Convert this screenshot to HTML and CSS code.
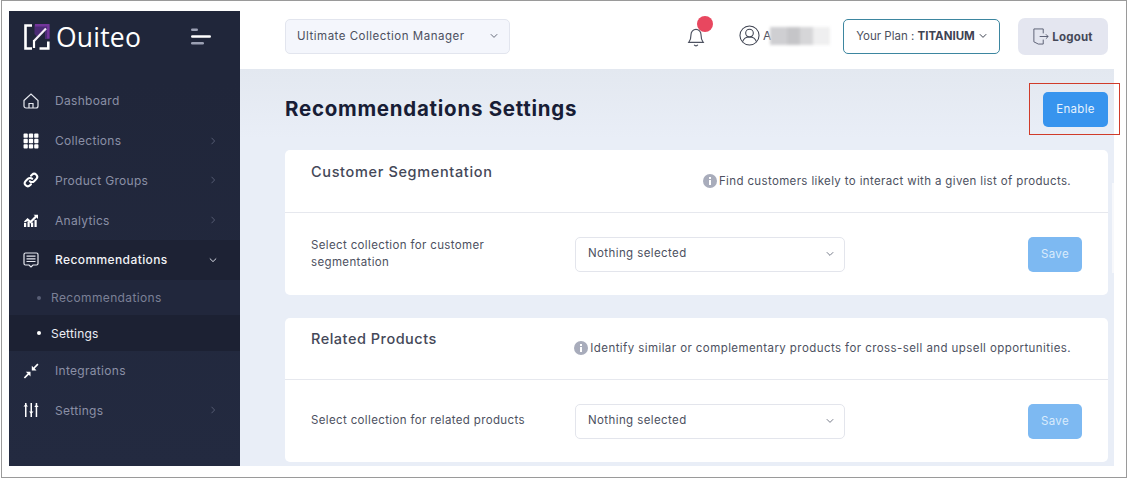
FILE: index.html
```html
<!DOCTYPE html>
<html lang="en">
<head>
<meta charset="utf-8">
<title>Recommendations Settings</title>
<link rel="stylesheet" href="styles.css">
</head>
<body>
<div class="frame">
  <aside class="sidebar">
    <div class="brand">
      <svg class="logo" width="26" height="26" viewBox="0 0 26 26">
        <path d="M10.500 0.500H25.500V15L21 15 21 4.500 13 12.500 10.500 10z" fill="#4a2a74"/>
        <path d="M11 1.300H24.300V14.500" fill="none" stroke="#73359b" stroke-width="2.400"/>
        <path d="M8 1.500H1.500V24.500H8" fill="none" stroke="#fff" stroke-width="2.600"/>
        <path d="M24.300 17.500V24.500H15.500" fill="none" stroke="#fff" stroke-width="2.600"/>
        <path d="M10 17L22 4.500" fill="none" stroke="#f4eef8" stroke-width="2.200"/>
        <path d="M10 16V24" fill="none" stroke="#fff" stroke-width="2.200"/>
      </svg>
      <span class="brand-name">Ouiteo</span>
      <svg class="burger" width="20" height="18" viewBox="0 0 20 18">
        <rect x="0" y="0.500" width="7" height="2.600" rx="1.300" fill="#9ba0b3"/>
        <rect x="0" y="7.200" width="20" height="2.600" rx="1.300" fill="#fff"/>
        <rect x="0" y="14" width="13" height="2.600" rx="1.300" fill="#9ba0b3"/>
      </svg>
    </div>
    <nav class="nav">
      <a class="nav-item">
        <svg class="nav-icon" width="16" height="16" viewBox="0 0 16 16" fill="none" stroke="#e6e8ef" stroke-width="1.200"><path d="M1 7.500L8 1l7 6.500V13a2 2 0 0 1-2 2H3a2 2 0 0 1-2-2z"/><path d="M6 15v-4.500h4V15"/></svg>
        <span class="nav-label">Dashboard</span>
      </a>
      <a class="nav-item">
        <svg class="nav-icon" width="16" height="16" viewBox="0 0 15 14" fill="#fff"><rect x="0.500" y="0" width="4" height="4" rx=".8"/><rect x="5.500" y="0" width="4" height="4" rx=".8"/><rect x="10.500" y="0" width="4" height="4" rx=".8"/><rect x="0.500" y="5" width="4" height="4" rx=".8"/><rect x="5.500" y="5" width="4" height="4" rx=".8"/><rect x="10.500" y="5" width="4" height="4" rx=".8"/><rect x="0.500" y="10" width="4" height="4" rx=".8"/><rect x="5.500" y="10" width="4" height="4" rx=".8"/><rect x="10.500" y="10" width="4" height="4" rx=".8"/></svg>
        <span class="nav-label">Collections</span>
        <svg class="chev" width="6" height="8" viewBox="0 0 6 8"><path d="M1.500 .8L4.600 4 1.500 7.200" fill="none" stroke="#555b72" stroke-width="1"/></svg>
      </a>
      <a class="nav-item">
        <svg class="nav-icon" width="16" height="16" viewBox="0 0 16 16" fill="none" stroke="#fff" stroke-width="2" stroke-linecap="round"><path d="M6.800 9.200a3 3 0 0 0 4.300 0l2.200-2.200a3 3 0 0 0-4.300-4.300L8 3.700"/><path d="M9.200 6.800a3 3 0 0 0-4.300 0L2.700 9a3 3 0 0 0 4.300 4.300l1-1"/></svg>
        <span class="nav-label">Product Groups</span>
        <svg class="chev" width="6" height="8" viewBox="0 0 6 8"><path d="M1.500 .8L4.600 4 1.500 7.200" fill="none" stroke="#555b72" stroke-width="1"/></svg>
      </a>
      <a class="nav-item">
        <svg class="nav-icon" width="16" height="16" viewBox="0 0 16 16" fill="#fff"><rect x="1" y="11" width="2.200" height="4"/><rect x="4.500" y="9.500" width="2.200" height="5.500"/><rect x="8" y="10.500" width="2.200" height="4.500"/><rect x="11.500" y="8" width="2.200" height="7"/><path d="M1 9.500l3.500-3.500 3 2.500 4.500-4.500-1.500-1.300H15V7l-1.400-1.400-6 6-3-2.600L1.800 10.600z"/></svg>
        <span class="nav-label">Analytics</span>
        <svg class="chev" width="6" height="8" viewBox="0 0 6 8"><path d="M1.500 .8L4.600 4 1.500 7.200" fill="none" stroke="#555b72" stroke-width="1"/></svg>
      </a>
      <a class="nav-item is-open">
        <svg class="nav-icon" width="16" height="16" viewBox="0 0 16 16" fill="none" stroke="#e6e8ef" stroke-width="1.200"><path d="M2.500 1h11A1.500 1.500 0 0 1 15 2.500v9a1.500 1.500 0 0 1-1.500 1.500H10l-2 2-2-2H2.500A1.500 1.500 0 0 1 1 11.500v-9A1.500 1.500 0 0 1 2.500 1z"/><path d="M3.500 4.200h9M3.500 6.800h9M3.500 9.500h9"/></svg>
        <span class="nav-label">Recommendations</span>
        <svg class="chev chev-open" width="8" height="6" viewBox="0 0 8 6"><path d="M.8 1.500L4 4.600 7.200 1.500" fill="none" stroke="#d5d8e2" stroke-width="1"/></svg>
      </a>
      <div class="submenu">
        <a class="sub-item"><i class="dot"></i>Recommendations</a>
        <a class="sub-item is-active"><i class="dot"></i>Settings</a>
      </div>
      <a class="nav-item">
        <svg class="nav-icon" width="16" height="16" viewBox="0 0 16 16" fill="#fff"><path d="M15.500 1.800L11.700 5.600 13.500 7.400H8.800V2.700l1.700 1.700L14.300.6z"/><path d="M.8 14.400l3.800-3.800-1.800-1.800h4.700v4.700l-1.700-1.700-3.800 3.800z"/></svg>
        <span class="nav-label">Integrations</span>
      </a>
      <a class="nav-item">
        <svg class="nav-icon" width="16" height="16" viewBox="0 0 16 16" fill="#fff"><rect x="2" y="1" width="1.500" height="14"/><rect x="7.500" y="1" width="1.500" height="14"/><rect x="12.700" y="1" width="1.500" height="14"/><path d="M.5 4.500l2.250-2.500L5 4.500zM6 9.500h4.500L8.250 12zM11.200 5l2.250-2.500L15.700 5z"/></svg>
        <span class="nav-label">Settings</span>
        <svg class="chev" width="6" height="8" viewBox="0 0 6 8"><path d="M1.500 .8L4.600 4 1.500 7.200" fill="none" stroke="#555b72" stroke-width="1"/></svg>
      </a>
    </nav>
  </aside>
  <div class="main">
    <header class="topbar">
      <div class="app-select">
        <span>Ultimate Collection Manager</span>
        <svg width="8" height="6" viewBox="0 0 8 6"><path d="M.8 1.200L4 4.400 7.200 1.200" fill="none" stroke="#666b7a" stroke-width="1"/></svg>
      </div>
      <div class="top-right">
        <div class="bell">
          <svg width="18" height="20" viewBox="0 0 20 22" fill="none" stroke="#4d5260" stroke-width="1.300"><path d="M10 2.500a5.500 5.500 0 0 0-5.500 5.500c0 5-1 7-2.500 9h16c-1.500-2-2.500-4-2.500-9A5.500 5.500 0 0 0 10 2.500z"/><path d="M8 19.500a2.200 2.200 0 0 0 4 0"/></svg>
          <span class="badge"></span>
        </div>
        <div class="user">
          <svg width="21" height="21" viewBox="0 0 22 22" fill="none" stroke="#3d4250" stroke-width="1.100"><circle cx="11" cy="11" r="10"/><circle cx="11" cy="8.500" r="4"/><path d="M3.800 17.500c1-3.500 3.500-5 7.200-5s6.200 1.500 7.200 5"/></svg>
          <span class="user-initial">A</span>
          <span class="user-blur"></span>
        </div>
        <div class="plan">Your Plan : <b>TITANIUM</b>
          <svg width="8" height="6" viewBox="0 0 8 6"><path d="M.8 1.200L4 4.400 7.200 1.200" fill="none" stroke="#3d4250" stroke-width="1"/></svg>
        </div>
        <button class="logout">
          <svg width="16" height="17" viewBox="0 0 18 19" fill="none" stroke="#50556a" stroke-width="1"><path d="M11.500 6V1H1v14.500L6 18h5.500v-5"/><path d="M7.500 9.500h9.500M14.500 7l2.500 2.500-2.500 2.500"/></svg>
          Logout
        </button>
      </div>
    </header>
    <main class="content">
      <div class="page-head">
        <h1>Recommendations Settings</h1>
        <div class="enable-wrap">
          <button class="btn-enable">Enable</button>
          <span class="annotation"></span>
        </div>
      </div>
      <section class="card">
        <div class="card-head">
          <h2>Customer Segmentation</h2>
          <p class="hint hint-a">
            <svg width="14" height="14" viewBox="0 0 14 14"><circle cx="7" cy="7" r="7" fill="#a8acbb"/><rect x="6" y="6" width="2" height="5" fill="#fff"/><rect x="6" y="3" width="2" height="2" fill="#fff"/></svg>
            Find customers likely to interact with a given list of products.
          </p>
        </div>
        <div class="card-body">
          <label class="field-label">Select collection for customer segmentation</label>
          <div class="select"><span>Nothing selected</span>
            <svg width="8" height="6" viewBox="0 0 8 6"><path d="M.8 1.200L4 4.400 7.200 1.200" fill="none" stroke="#777c8a" stroke-width="1"/></svg>
          </div>
          <button class="btn-save">Save</button>
        </div>
      </section>
      <section class="card">
        <div class="card-head">
          <h2>Related Products</h2>
          <p class="hint">
            <svg width="14" height="14" viewBox="0 0 14 14"><circle cx="7" cy="7" r="7" fill="#a8acbb"/><rect x="6" y="6" width="2" height="5" fill="#fff"/><rect x="6" y="3" width="2" height="2" fill="#fff"/></svg>
            Identify similar or complementary products for cross-sell and upsell opportunities.
          </p>
        </div>
        <div class="card-body">
          <label class="field-label">Select collection for related products</label>
          <div class="select"><span>Nothing selected</span>
            <svg width="8" height="6" viewBox="0 0 8 6"><path d="M.8 1.200L4 4.400 7.200 1.200" fill="none" stroke="#777c8a" stroke-width="1"/></svg>
          </div>
          <button class="btn-save">Save</button>
        </div>
      </section>
    </main>
  </div>
</div>
</body>
</html>
```
FILE: styles.css
```css
* { box-sizing: border-box; }
html, body { margin: 0; padding: 0; background: #fff; }
body { font-family: Inter, "Liberation Sans", sans-serif; color: #3f4352; overflow: hidden; }
h1, h2, p { margin: 0; }
button { font: inherit; border: 0; cursor: pointer; }

.frame {
  width: 1126px; height: 478px; margin-left: 1px;
  border: 1px solid #9a9a9a;
  padding: 10px 12px 11px 7px;
  display: flex;
}

/* sidebar */
.sidebar { width: 231px; flex: none; background: #20263a; display: flex; flex-direction: column; }
.brand { height: 70px; display: flex; align-items: center; padding: 0 29px 0 15px; flex: none; }
.logo { flex: none; margin-top: -19px; }
.brand-name { font-family: "Open Sans", sans-serif; font-size: 26.500px; color: #fff; margin-left: 6px; margin-top: -19px; letter-spacing: .2px; line-height: 30px; }
.burger { margin-left: auto; margin-top: -19px; }

.nav { display: flex; flex-direction: column; flex: 1; background: linear-gradient(#20263a, #232a40); }
.nav-item { height: 39.750px; flex: none; display: flex; align-items: center; padding: 0 24px 0 14px; font-size: 12px; color: #8b90a6; letter-spacing: .3px; }
.nav-icon { flex: none; width: 16px; margin-right: 16px; }
.nav-label { flex: 1; }
.chev { flex: none; }
.chev-open { margin-right: -1px; }
.nav-item.is-open { background: #1d2234; color: #f2f3f7; font-weight: 500; letter-spacing: .4px; }
.submenu { background: #21273c; }
.sub-item { height: 35.500px; display: flex; align-items: center; padding-left: 28px; font-size: 12px; letter-spacing: .36px; color: #7b8096; }
.sub-item .dot { width: 4px; height: 4px; border-radius: 50%; background: #585e75; margin-right: 10px; flex: none; }
.sub-item.is-active { background: #1c2133; color: #eceef4; letter-spacing: .2px; }
.sub-item.is-active .dot { background: #fff; }

/* main */
.main { flex: 1; min-width: 0; display: flex; flex-direction: column; }
.topbar { height: 58px; flex: none; background: #fff; display: flex; align-items: center; padding: 0 6px 7px 45px; }
.app-select {
  width: 225px; height: 35px; background: #f4f6fc; border: 1px solid #e2e5ee; border-radius: 5px;
  display: flex; align-items: center; justify-content: space-between;
  padding: 0 11px 1px 11px; font-size: 11.500px; color: #4c5060; letter-spacing: .5px;
}
.top-right { margin-left: auto; display: flex; align-items: center; }
.bell { position: relative; width: 19px; height: 20px; margin-right: 33px; }
.bell svg { display: block; }
.badge { position: absolute; left: 10px; top: -11px; width: 16px; height: 16px; border-radius: 50%; background: #e8475f; }
.user { display: flex; align-items: center; margin-right: 12px; width: 92px; margin-top: -2px; }
.user svg { flex: none; }
.user-initial { font-size: 12px; color: #4c5060; margin-left: 3px; margin-right: -1px; }
.user-blur {
  width: 60px; height: 18px; filter: blur(1.500px);
  background: linear-gradient(90deg, #cfcfd2 0 28%, #c5c5c8 28% 50%, #d6d6d8 50% 72%, #efeff0 72% 100%);
}
.plan {
  width: 157px; height: 35px; border: 1px solid #3d86a0; border-radius: 5px; background: #fff;
  display: flex; align-items: center; justify-content: center; gap: 4px; padding-bottom: 1px;
  font-size: 11.500px; color: #4c5060; white-space: pre; letter-spacing: 0;
}
.plan b { font-weight: 700; color: #3f4352; margin-left: -4px; }
.logout {
  width: 90px; height: 37px; margin-left: 18px; background: #e4e6f0; border-radius: 7px;
  display: flex; align-items: center; justify-content: center; gap: 3px;
  font-size: 11.500px; font-weight: 700; color: #444858; letter-spacing: .2px;
}

/* content */
.content { position: relative; flex: 1; min-height: 0; padding: 0 6px 0 45px; background: linear-gradient(#e3e8f0, #e9eef7 70px); }
.content::after { content: ""; position: absolute; right: 0; top: 114px; width: 2px; height: 90px; background: #f7f8fb; }
.page-head { height: 81px; display: flex; align-items: center; justify-content: space-between; }
h1 { font-size: 20.500px; font-weight: 700; color: #181d36; letter-spacing: .73px; margin-bottom: 3px; white-space: nowrap; }
.enable-wrap { position: relative; margin-bottom: 1px; }
.btn-enable { display: block; width: 65px; height: 35px; background: #3794ee; border-radius: 5px; color: #e6f2fd; font-size: 11.500px; letter-spacing: .3px; }
.annotation { position: absolute; left: -14px; top: -9px; width: 91px; height: 52px; border: 1px solid #d03b2a; pointer-events: none; }

.card { background: #fff; border-radius: 5px; margin-bottom: 23px; }
.card:last-child { margin-bottom: 0; }
.card-head { height: 63px; border-bottom: 1px solid #e6e8ee; display: flex; justify-content: space-between; align-items: flex-start; padding: 0 37px 0 26px; }
.card:last-child .card-head { height: 62px; }
.card:last-child h2 { margin-top: 11px; letter-spacing: .5px; }
h2 { font-size: 14.500px; font-weight: 500; color: #444858; line-height: 20px; margin-top: 12px; letter-spacing: .65px; }
.hint { display: flex; align-items: center; gap: 2px; font-size: 11.500px; color: #4d5161; line-height: 18px; margin-top: 21px; letter-spacing: .42px; }
.hint svg { flex: none; margin-right: 0; }
.hint-a { margin-top: 22px; letter-spacing: .36px; }
.card-body { display: flex; align-items: center; padding: 24px 26px 23px; }
.field-label { width: 264px; flex: none; padding-right: 60px; margin-top: -2px; font-size: 11.500px; line-height: 17px; color: #4d5161; letter-spacing: .36px; }
.card:last-child .field-label { padding-right: 0; white-space: nowrap; }
.select {
  width: 270px; height: 35px; flex: none; border: 1px solid #e3e5ec; border-radius: 5px; background: #fff;
  display: flex; align-items: center; justify-content: space-between; padding: 0 10px 3px 12px;
  font-size: 11.500px; color: #4c5060; letter-spacing: .4px;
}
.select svg { margin-top: 2px; }
.btn-save { margin-left: auto; width: 54px; height: 35px; padding: 0 0 2px; background: #7db9f2; border-radius: 5px; color: #d9ebfc; font-size: 11.500px; letter-spacing: .4px; }
```
